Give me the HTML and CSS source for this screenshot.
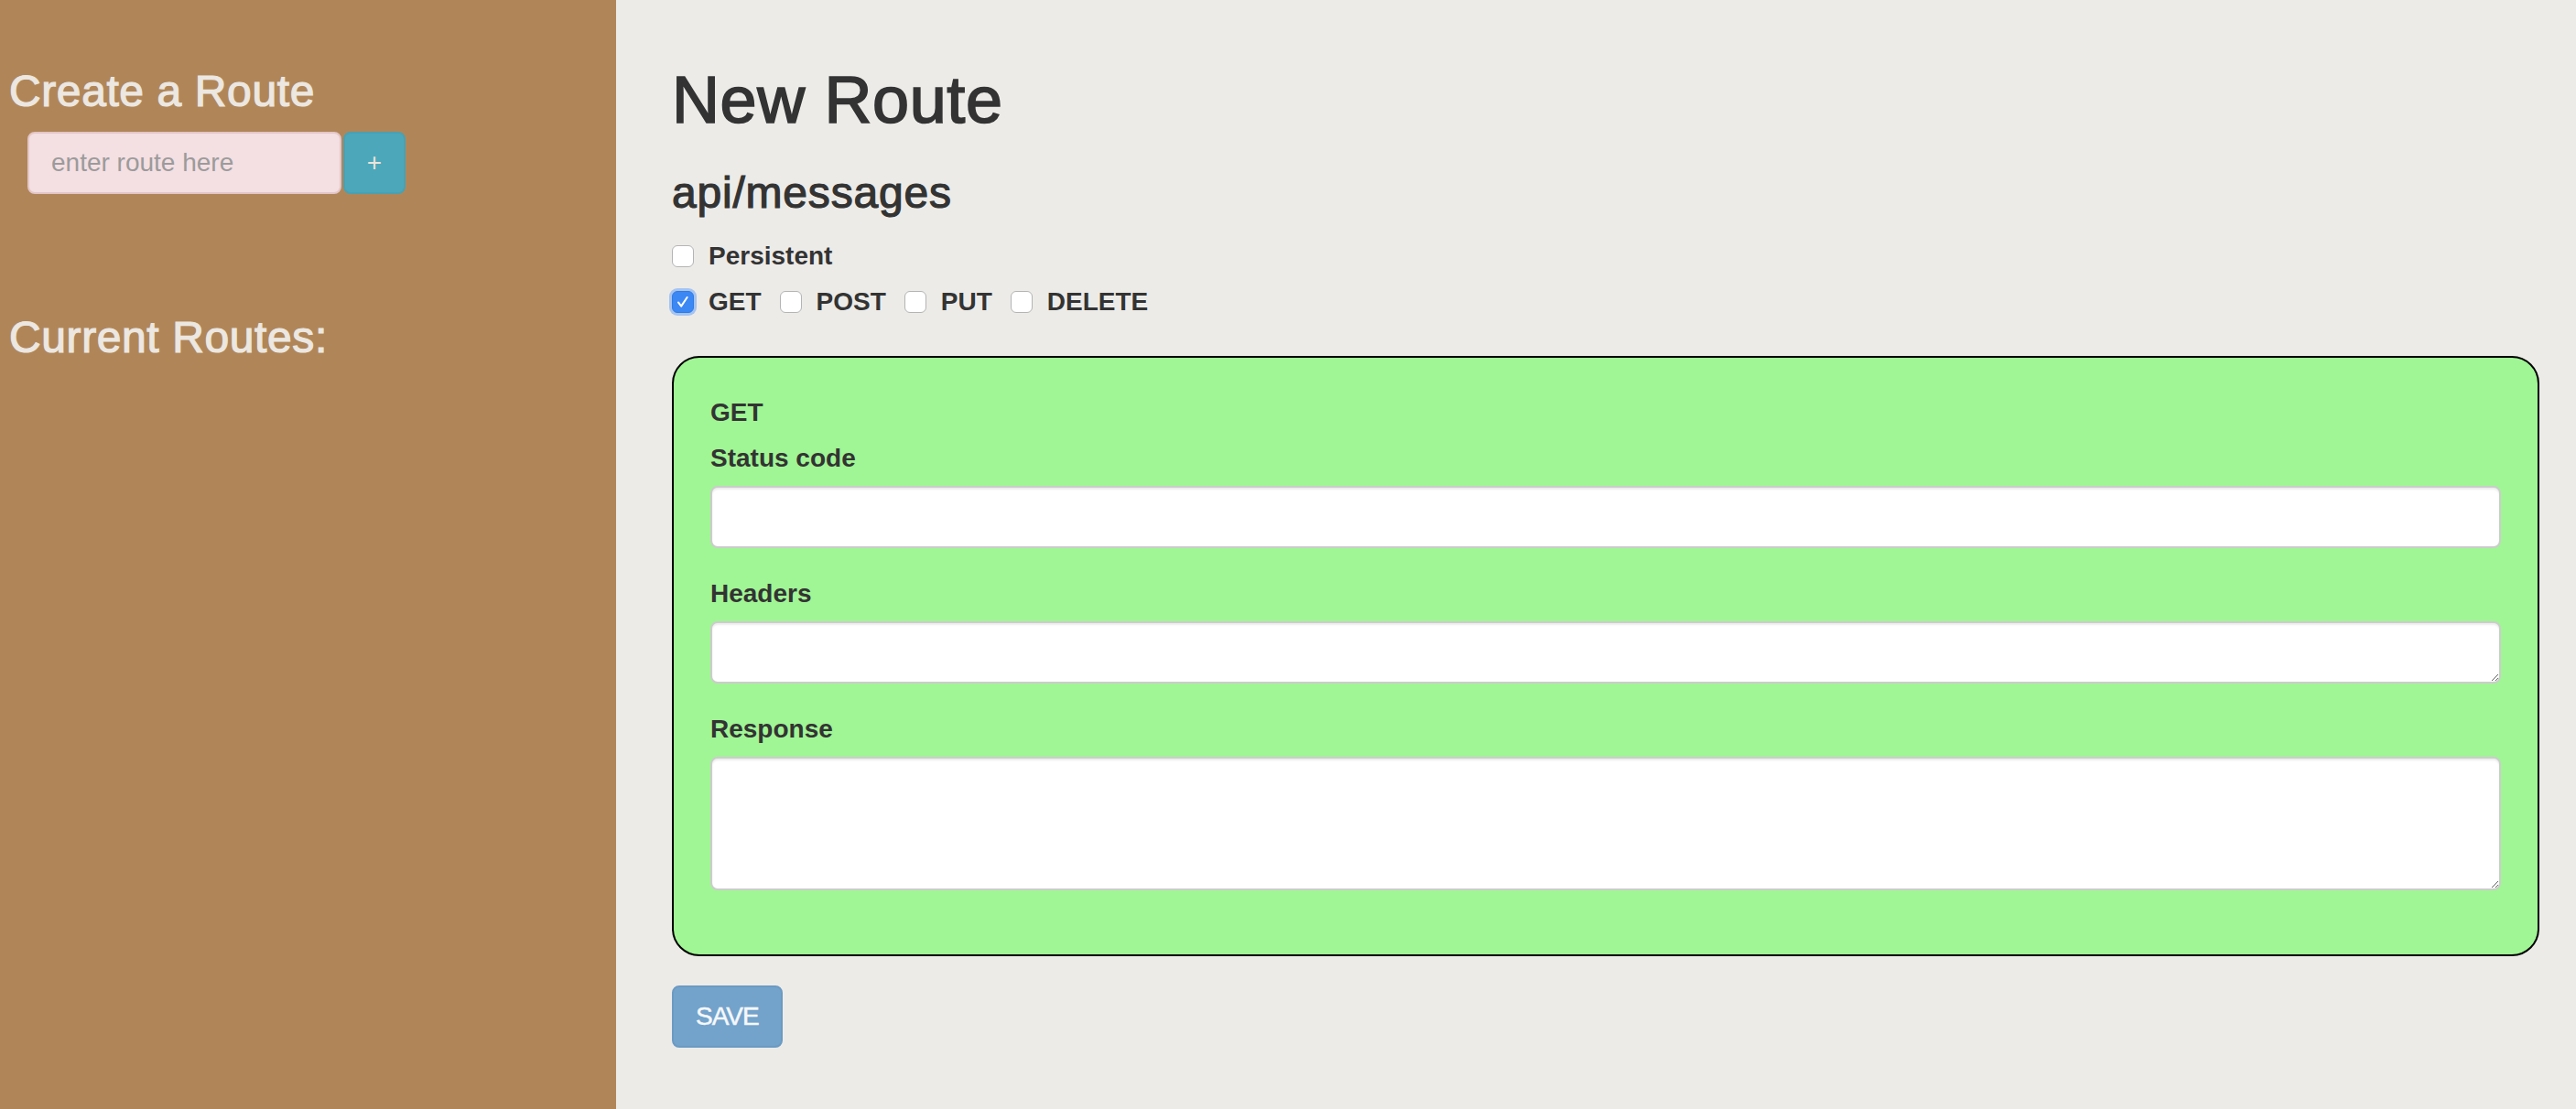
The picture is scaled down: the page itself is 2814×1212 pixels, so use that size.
FILE: index.html
```html
<!DOCTYPE html>
<html lang="en">
<head>
<meta charset="utf-8">
<title>New Route</title>
<link rel="stylesheet" href="styles.css">
</head>
<body>
<div class="app">
  <aside class="sidebar">
    <h3 class="side-title">Create a Route</h3>
    <form class="route-form">
      <input class="route-input" type="text" placeholder="enter route here">
      <button class="add-btn" type="button">+</button>
    </form>
    <h3 class="side-title current">Current Routes:</h3>
  </aside>
  <main class="main">
    <h1 class="page-title">New Route</h1>
    <h3 class="route-name">api/messages</h3>
    <div class="check-row">
      <label class="check"><span class="box"></span>Persistent</label>
    </div>
    <div class="check-row">
      <label class="check"><span class="box checked"><svg viewBox="0 0 24 24" width="24" height="24"><path d="M6.5 12.5 L10 17 L17 6.5" fill="none" stroke="#fff" stroke-width="2.2" stroke-linecap="round" stroke-linejoin="round"/></svg></span>GET</label>
      <label class="check"><span class="box"></span>POST</label>
      <label class="check"><span class="box"></span>PUT</label>
      <label class="check"><span class="box"></span>DELETE</label>
    </div>
    <div class="method-panel">
      <div class="method-name">GET</div>
      <div class="form-group">
        <label class="field-label">Status code</label>
        <input class="field" type="text">
      </div>
      <div class="form-group">
        <label class="field-label">Headers</label>
        <textarea class="field area-sm"></textarea>
      </div>
      <div class="form-group">
        <label class="field-label">Response</label>
        <textarea class="field area-lg"></textarea>
      </div>
    </div>
    <button class="save-btn" type="button">SAVE</button>
  </main>
</div>
</body>
</html>
```
FILE: styles.css
```css
* { box-sizing: border-box; }

html, body {
  margin: 0;
  height: 100%;
}

body {
  font-family: "Liberation Sans", Arial, Helvetica, sans-serif;
  font-size: 28px;
  line-height: 40px;
  color: #333;
  background: #ecebe8;
}

.app {
  display: flex;
  min-height: 100vh;
}

/* ---------- sidebar ---------- */
.sidebar {
  flex: 0 0 673px;
  width: 673px;
  background: #b08659;
  padding: 73px 0 0 10px;
}

.side-title {
  margin: 0;
  font-size: 48px;
  line-height: 53px;
  font-weight: normal;
  letter-spacing: 0.6px;
  -webkit-text-stroke: 1.2px #ece7e1;
  color: #ece7e1;
}

.side-title.current {
  margin-top: 130px;
}

.route-form {
  display: flex;
  margin: 18px 0 0 20px;
}

.route-input {
  width: 343px;
  height: 68px;
  border: 2px solid #e3c6c8;
  border-radius: 8px;
  background: #f4dfe2;
  padding: 0 24px;
  font-family: inherit;
  font-size: 28px;
  color: #555;
  outline: none;
}

.route-input::placeholder {
  color: #9b9b9b;
}

.add-btn {
  width: 68px;
  height: 68px;
  margin-left: 2px;
  border: 2px solid #48a1b4;
  border-radius: 8px;
  background: #4ca7ba;
  color: #ebe5da;
  font-family: inherit;
  font-size: 28px;
  padding: 0;
}

/* ---------- main ---------- */
.main {
  flex: 1;
  padding: 69px 40px 40px 61px;
  background: #ecebe8;
}

.page-title {
  margin: 0;
  font-size: 72px;
  line-height: 80px;
  font-weight: normal;
  letter-spacing: 0.6px;
  -webkit-text-stroke: 1.7px #333;
}

.route-name {
  margin: 35px 0 0;
  font-size: 48px;
  line-height: 53px;
  font-weight: normal;
  letter-spacing: 0.8px;
  -webkit-text-stroke: 1.2px #333;
}

.check-row {
  display: flex;
  align-items: center;
  height: 40px;
  margin-top: 10px;
}

.route-name + .check-row {
  margin-top: 23px;
}

.check {
  display: flex;
  align-items: center;
  font-weight: bold;
  margin-right: 20px;
}

.box {
  width: 24px;
  height: 24px;
  margin-right: 16px;
  border: 1.5px solid #b4b4b4;
  border-radius: 6px;
  background: #fff;
  display: flex;
  align-items: center;
  justify-content: center;
}

.box.checked {
  background: #3b88f5;
  border-color: #2f7be6;
  box-shadow: 0 0 0 3px rgba(120, 170, 245, 0.6);
}

.box svg {
  display: block;
  width: 22px;
  height: 22px;
}

.method-panel {
  margin-top: 39px;
  border: 2px solid #000;
  border-radius: 30px;
  background: #a0f594;
  padding: 40px;
}

.method-name {
  font-weight: bold;
  margin-bottom: 10px;
}

.form-group {
  margin-bottom: 30px;
}

.field-label {
  display: block;
  font-weight: bold;
  margin-bottom: 10px;
}

.field {
  display: block;
  width: 100%;
  height: 68px;
  border: 2px solid #cccccc;
  border-radius: 8px;
  background: #fff;
  box-shadow: inset 0 2px 2px rgba(0, 0, 0, 0.075);
  font-family: inherit;
  font-size: 28px;
  padding: 12px 24px;
  outline: none;
}

.area-sm {
  height: 68px;
  resize: vertical;
}

.area-lg {
  height: 146px;
  resize: vertical;
}

.save-btn {
  margin-top: 32px;
  height: 68px;
  padding: 0 24px;
  border: 2px solid #6b9ac3;
  border-radius: 8px;
  background: #73a2ca;
  color: #f5f8fb;
  font-family: inherit;
  font-size: 28px;
  letter-spacing: -1px;
  -webkit-text-stroke: 0.5px #f5f8fb;
}
```
